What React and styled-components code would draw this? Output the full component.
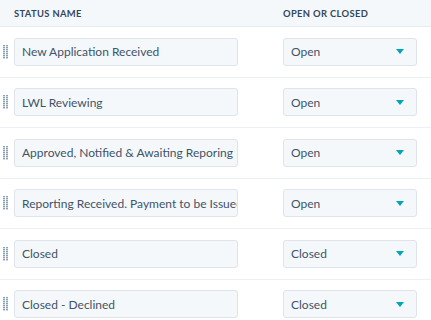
import React from 'react';
import styled, { createGlobalStyle } from 'styled-components';

const GlobalStyle = createGlobalStyle`
    html, body {
        margin: 0;
        padding: 0;
        background: #fff;
    }
    body {
        font-family: Lato, "Open Sans", sans-serif;
        color: #33475b;
    }
`;

const Table = styled.div`
    width: 431px;
`;

const HeaderRow = styled.div`
    display: grid;
    grid-template-columns: 269px 1fr;
    align-items: center;
    height: 27px;
    box-sizing: border-box;
    padding-left: 14px;
    background: #f5f8fa;
    border-bottom: 1px solid #e5edf3;
`;

const HeaderCell = styled.div`
    font-size: 9.4px;
    font-weight: 700;
    letter-spacing: 0.35px;
    text-transform: uppercase;
    color: #33475b;
`;

const Row = styled.div`
    display: grid;
    grid-template-columns: 14px 224px 45px 134px;
    align-items: center;
    height: 50.5px;
    box-sizing: border-box;
    border-bottom: 1px solid #eaf0f6;
`;

const Handle = styled.div`
    display: flex;
    padding-left: 3px;
    color: #8aa0b8;
`;

const Field = styled.div`
    grid-column: ${({ col }) => col};
    display: flex;
    align-items: center;
    justify-content: space-between;
    height: 28px;
    box-sizing: border-box;
    padding: 0 12px 0 7px;
    background: #f5f8fa;
    border: 1px solid #dfe3eb;
    border-radius: 3px;
    font-size: 12px;
    color: #3e5468;
    white-space: nowrap;
    overflow: hidden;
`;

const Caret = styled.span`
    flex: none;
    width: 0;
    height: 0;
    border-left: 4.5px solid transparent;
    border-right: 4.5px solid transparent;
    border-top: 5px solid #00a4bd;
`;

const DragDots = () => (
    <svg width="6" height="14" viewBox="0 0 6 14">
        {[0, 1, 2, 3, 4, 5, 6].map((i) => (
            <g key={i} fill="currentColor">
                <rect x="0" y={i * 2} width="2" height="1.4" />
                <rect x="3" y={i * 2} width="2" height="1.4" />
            </g>
        ))}
    </svg>
);

const statuses = [
    { name: 'New Application Received', state: 'Open' },
    { name: 'LWL Reviewing', state: 'Open' },
    { name: 'Approved, Notified & Awaiting Reporing', state: 'Open' },
    { name: 'Reporting Received. Payment to be Issued', state: 'Open' },
    { name: 'Closed', state: 'Closed' },
    { name: 'Closed - Declined', state: 'Closed' },
];

const App = () => {
    return (
        <Table>
            <GlobalStyle />
            <HeaderRow>
                <HeaderCell>Status name</HeaderCell>
                <HeaderCell>Open or closed</HeaderCell>
            </HeaderRow>
            {statuses.map((s) => (
                <Row key={s.name}>
                    <Handle>
                        <DragDots />
                    </Handle>
                    <Field col={2}>{s.name}</Field>
                    <Field col={4}>
                        <span>{s.state}</span>
                        <Caret />
                    </Field>
                </Row>
            ))}
        </Table>
    );
};

export default App;
